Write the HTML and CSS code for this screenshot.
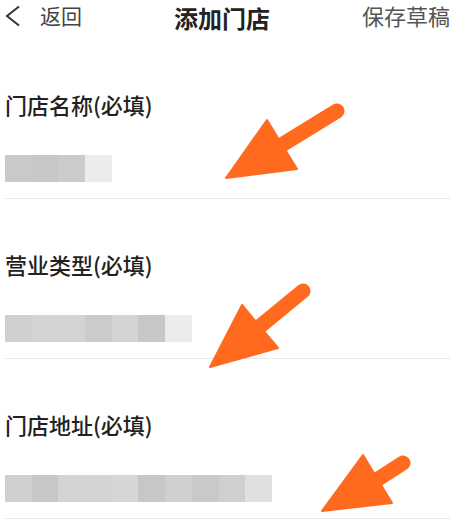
FILE: index.html
```html
<!DOCTYPE html>
<html lang="zh-CN">
<head>
<meta charset="utf-8">
<title>添加门店</title>
<link rel="stylesheet" href="styles.css">
</head>
<body>
<div class="page">
  <header class="topbar">
    <div class="back">
      <svg class="chev" width="16" height="22" viewBox="0 0 16 22"><polyline points="14,1.5 2,11 14,20.5" fill="none" stroke="#333" stroke-width="2" stroke-linejoin="miter"/></svg>
      <span class="back-text">返回</span>
    </div>
    <div class="title">添加门店</div>
    <div class="draft">保存草稿</div>
  </header>

  <section class="field">
    <div class="label">门店名称(必填)</div>
    <div class="blur">
      <span class="seg g2"></span><span class="seg g1"></span><span class="seg g3"></span><span class="seg g9"></span>
    </div>
  </section>

  <section class="field">
    <div class="label">营业类型(必填)</div>
    <div class="blur">
      <span class="seg g4"></span><span class="seg g5"></span><span class="seg g5"></span><span class="seg g3"></span><span class="seg g5"></span><span class="seg g1"></span><span class="seg g9"></span>
    </div>
  </section>

  <section class="field">
    <div class="label">门店地址(必填)</div>
    <div class="blur">
      <span class="seg g4"></span><span class="seg g1"></span><span class="seg g5"></span><span class="seg g5"></span><span class="seg g6"></span><span class="seg g1"></span><span class="seg g4"></span><span class="seg g2"></span><span class="seg g4"></span><span class="seg g8"></span>
    </div>
  </section>

  <svg class="arrows" viewBox="0 0 463 523" width="463" height="523">
    <g fill="#FF6A1F" stroke="#FF6A1F" stroke-linecap="round" stroke-linejoin="round">
      <line x1="337" y1="111" x2="280" y2="146" stroke-width="15"/>
      <polygon points="267,120 297,169 226,178" stroke-width="2"/>
      <line x1="303" y1="291" x2="258" y2="328" stroke-width="15"/>
      <polygon points="242,305 278,348 210,367" stroke-width="2"/>
      <line x1="403" y1="463" x2="375" y2="481" stroke-width="15"/>
      <polygon points="363,455 392,503 322,511" stroke-width="2"/>
    </g>
  </svg>
</div>
</body>
</html>
```

FILE: styles.css
```css
html, body {
  margin: 0;
  padding: 0;
  background: #ffffff;
}

body {
  font-family: "Noto Sans CJK SC", "Noto Sans", "Liberation Sans", sans-serif;
  color: #222;
}

.page {
  position: relative;
  width: 463px;
  height: 523px;
  overflow: hidden;
  padding: 0 13px 0 5px;
  box-sizing: border-box;
}

.topbar {
  height: 39px;
  display: flex;
  align-items: flex-start;
  justify-content: space-between;
}

.back {
  display: flex;
  align-items: center;
  gap: 19px;
  height: 30px;
}

.chev {
  display: block;
  margin-top: 1px;
}

.back-text {
  font-size: 21px;
  line-height: 30px;
  color: #444;
}

.title {
  font-size: 24px;
  line-height: 35px;
  font-weight: 700;
  color: #222;
}

.draft {
  font-size: 22px;
  line-height: 30px;
  color: #555;
}

.field {
  padding-top: 51px;
  padding-bottom: 16px;
  border-bottom: 1px solid #e8e8e8;
}

.label {
  font-size: 22px;
  line-height: 28px;
  font-weight: 500;
  color: #222;
}

.blur {
  margin-top: 37px;
  height: 27px;
  display: flex;
  filter: blur(0.6px);
}

.seg {
  flex: 0 0 26.7px;
  height: 27px;
}

.g1 { background: #c7c7c7; }
.g2 { background: #c9c9c9; }
.g3 { background: #cbcbcb; }
.g4 { background: #cfcfcf; }
.g5 { background: #d3d3d3; }
.g6 { background: #d6d6d6; }
.g8 { background: #e0e0e0; }
.g9 { background: #ececec; }

.arrows {
  position: absolute;
  left: 0;
  top: 0;
  pointer-events: none;
}
```
